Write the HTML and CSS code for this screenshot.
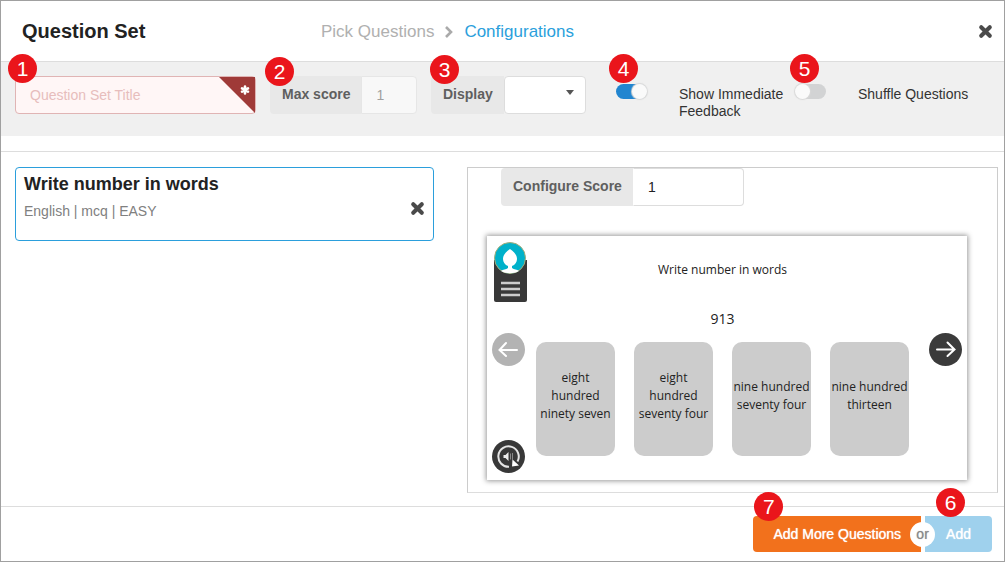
FILE: index.html
```html
<!DOCTYPE html>
<html lang="en">
<head>
<meta charset="utf-8">
<title>Question Set</title>
<link rel="stylesheet" href="styles.css">
</head>
<body>
<div class="frame">
  <header class="header">
    <h1 class="header-title">Question Set</h1>
    <nav class="steps" aria-label="Steps">
      <a class="step" href="#pick">Pick Questions</a>
      <svg class="chevron" viewBox="0 0 10 14" aria-hidden="true"><path d="M2 2l5 5-5 5"/></svg>
      <a class="step step-active" href="#config">Configurations</a>
    </nav>
    <button class="icon-button" type="button" aria-label="Close">
      <svg class="cross" viewBox="0 0 14 14" aria-hidden="true"><path d="M3 3l8 8M11 3l-8 8"/></svg>
    </button>
  </header>

  <form class="toolbar">
    <div class="cell">
      <div class="title-field">
        <input class="title-input" type="text" placeholder="Question Set Title" aria-label="Question Set Title">
        <svg class="required" viewBox="0 0 36 36" aria-hidden="true">
          <path d="M0 0H36V36Z" fill="#9f3a38"/>
          <path d="M26 9.5v7M23 11.3l6 3.4M29 11.3l-6 3.4" stroke="#fff" stroke-width="2.6" stroke-linecap="round"/>
        </svg>
        <span class="badge badge-title">1</span>
      </div>
    </div>
    <div class="cell">
      <div class="field">
        <label class="field-label" for="max">Max score</label>
        <input class="field-input" id="max" type="text" value="1" disabled>
        <span class="badge badge-max">2</span>
      </div>
    </div>
    <div class="cell cell-display">
      <div class="field">
        <label class="field-label" for="display">Display</label>
        <select class="field-input field-select" id="display"><option></option></select>
        <svg class="caret" viewBox="0 0 8 5" aria-hidden="true"><path d="M0 0h8L4 5z"/></svg>
        <span class="badge badge-display">3</span>
      </div>
    </div>
    <div class="switch-cell">
      <input class="switch" id="feedback" type="checkbox" role="switch" checked>
      <label class="switch-label" for="feedback">Show Immediate Feedback</label>
      <span class="badge badge-feedback">4</span>
    </div>
    <div class="switch-cell">
      <input class="switch" id="shuffle" type="checkbox" role="switch">
      <label class="switch-label" for="shuffle">Shuffle Questions</label>
      <span class="badge badge-shuffle">5</span>
    </div>
  </form>

  <main class="content">
    <article class="card">
      <div>
        <h2 class="card-title">Write number in words</h2>
        <p class="card-meta">English | mcq | EASY</p>
      </div>
      <button class="icon-button" type="button" aria-label="Remove question">
        <svg class="cross" viewBox="0 0 14 14" aria-hidden="true"><path d="M3 3l8 8M11 3l-8 8"/></svg>
      </button>
    </article>

    <section class="panel">
      <div class="field field-score">
        <label class="field-label" for="score">Configure Score</label>
        <input class="field-input" id="score" type="text" value="1">
      </div>
      <div class="preview">
        <div class="rail">
          <button class="menu" type="button" aria-label="Menu">
            <svg viewBox="0 0 33 62" width="33" height="62" aria-hidden="true">
              <path d="M0 19h33v40a2 2 0 0 1-2 2H2a2 2 0 0 1-2-2z" fill="#383838"/>
              <circle cx="16" cy="17" r="15.5" fill="#00b1ca" stroke="#a5ad79"/>
              <path d="M16 8c-5 3-7 7-7 10 0 3 2 6 5 7v2c-2 2-5 1-7 3 5 3 13 3 18 0-2-2-5-1-7-3v-2c3-1 5-4 5-7 0-3-2-7-7-10z" fill="#fff"/>
              <path d="M7 42h19M7 48h19M7 54h19" stroke="#ccc" stroke-width="2.6"/>
            </svg>
          </button>
          <button class="round round-prev" type="button" aria-label="Previous">
            <svg viewBox="0 0 33 33" aria-hidden="true">
              <circle cx="16.5" cy="16.5" r="16.5" fill="#b3b3b3"/>
              <path d="M25 17H8M14 10l-6.5 7 6.5 6" fill="none" stroke="#fff" stroke-width="2" stroke-linecap="round"/>
            </svg>
          </button>
          <button class="round round-audio" type="button" aria-label="Replay audio">
            <svg viewBox="0 0 33 33" aria-hidden="true">
              <circle cx="16.5" cy="16.5" r="16.5" fill="#383838"/>
              <path d="M17 26.8A10.2 10.2 0 1 1 25.5 21.5" fill="none" stroke="#e5e5e5" stroke-width="2"/>
              <path d="M20 26.5l.5-7 6.500 6z" fill="#fff"/>
              <path d="M11.500 15h2l3-3v9l-3-3h-2z" fill="#eee"/>
              <path d="M18.500 13.500v6M20.500 13v7" stroke="#888" stroke-width="1"/>
            </svg>
          </button>
        </div>
        <div class="question">
          <p class="question-text">Write number in words</p>
          <p class="question-number">913</p>
          <div class="options">
            <button class="option" type="button">eight hundred ninety seven</button>
            <button class="option" type="button">eight hundred seventy four</button>
            <button class="option" type="button">nine hundred seventy four</button>
            <button class="option" type="button">nine hundred thirteen</button>
          </div>
        </div>
        <button class="round round-next" type="button" aria-label="Next">
          <svg viewBox="0 0 33 33" aria-hidden="true">
            <circle cx="16.5" cy="16.5" r="16.5" fill="#3b3b3b"/>
            <path d="M8 16.5h17M18.5 9.5l7 7-7 6.5" fill="none" stroke="#fff" stroke-width="2" stroke-linecap="round"/>
          </svg>
        </button>
      </div>
    </section>
  </main>

  <footer class="footer">
    <div class="actions">
      <button class="action action-more" type="button">Add More Questions<span class="or">or</span></button>
      <button class="action action-add" type="button">Add</button>
      <span class="badge badge-more">7</span>
      <span class="badge badge-add">6</span>
    </div>
  </footer>
</div>
</body>
</html>
```
FILE: styles.css
```css
* { box-sizing: border-box; }

body {
  margin: 0;
  font: 14px/17px "Liberation Sans", Arial, sans-serif;
  color: #222;
  background: #fff;
}

h1, h2, p { margin: 0; }

button, input, select { font: inherit; color: inherit; }

button {
  padding: 0;
  border: 0;
  background: none;
  cursor: pointer;
}

svg { display: block; }

.frame {
  display: flex;
  flex-direction: column;
  min-height: 100vh;
  border: 1px solid #a0a0a0;
}

/* Header */
.header {
  display: grid;
  grid-template-columns: 299px 1fr auto;
  align-items: center;
  height: 61px;
  padding: 0 11px 0 21px;
  border-bottom: 1px solid #ddd;
}

.header-title { font-size: 20px; line-height: 24px; }

.steps {
  display: flex;
  align-items: center;
  gap: 10px;
  padding-top: 1px;
  font-size: 17px;
  line-height: 22px;
}

.step { color: #b0b0b0; text-decoration: none; }
.step-active { color: #2b9fdc; }

.chevron {
  width: 10px;
  height: 14px;
  fill: none;
  stroke: #aaa;
  stroke-width: 2.6;
}

.cross {
  width: 15px;
  height: 15px;
  fill: none;
  stroke: #4a4a4a;
  stroke-width: 3.8;
  stroke-linecap: round;
}

/* Toolbar */
.toolbar {
  display: grid;
  grid-template-columns: 255fr 161fr 185fr 179fr 194fr;
  margin-bottom: 15px;
  padding: 14px 15px 16px 14px;
  background: #f0f0f0;
}

.cell { padding-right: 14px; min-width: 0; }
.cell-display { padding-right: 30px; }

.title-field { position: relative; }

.title-input {
  display: block;
  width: 100%;
  height: 38px;
  padding: 0 14px;
  border: 1px solid #e0b4b4;
  border-radius: 4px;
  background: #fff6f6;
  outline: 0;
}

.title-input::placeholder { color: #e7bdbc; opacity: 1; }

.required {
  position: absolute;
  top: 1px;
  right: 1px;
  width: 36px;
  height: 36px;
}

.field { position: relative; display: flex; height: 38px; }

.field-label {
  padding: 10px 11px 10px 12px;
  border-radius: 4px 0 0 4px;
  background: #e8e8e8;
  color: #5f5f5f;
  font-weight: bold;
  line-height: 17px;
  white-space: nowrap;
}

.field-input {
  flex: 1;
  min-width: 0;
  padding: 0 14px;
  border: 1px solid #ddd;
  border-left-color: transparent;
  border-radius: 0 4px 4px 0;
  background: #fff;
  outline: 0;
}

.field-input:disabled {
  border-color: #e6e6e6;
  background: #f8f8f8;
  color: #a0a0a0;
}

.field-select {
  appearance: none;
  border-color: #ddd;
  border-radius: 4px;
}

.caret {
  position: absolute;
  top: 14px;
  right: 12px;
  width: 8px;
  height: 5px;
  fill: #555;
  pointer-events: none;
}

.switch-cell {
  position: relative;
  display: flex;
  align-items: flex-start;
  gap: 32px;
  padding-top: 8px;
}

.switch {
  appearance: none;
  flex: none;
  width: 31px;
  height: 15px;
  margin: 0;
  border-radius: 8px;
  background: #d2d3d4;
}

.switch::before {
  content: "";
  display: block;
  width: 15px;
  height: 15px;
  border-radius: 50%;
  background: #fafafa;
  box-shadow: 0 0 1px 1px #d8d8d8;
}

.switch:checked { background: #2185d0; }
.switch:checked::before { margin-left: auto; }

.switch-label { padding-top: 2px; color: #333; }

/* Numbered markers */
.badge {
  position: absolute;
  width: 29px;
  height: 29px;
  border-radius: 50%;
  background: #ea151b;
  color: #fff;
  font-size: 21px;
  line-height: 29px;
  text-align: center;
}

.badge-title { top: -22px; left: -7px; }
.badge-max { top: -19px; left: -5px; }
.badge-display { top: -21px; left: -1px; }
.badge-feedback { top: -22px; left: -7px; }
.badge-shuffle { top: -22px; left: -5px; }
.badge-more { top: -24px; left: 1px; }
.badge-add { top: -28px; right: 27px; }

/* Content */
.content {
  display: grid;
  flex: 1;
  grid-template-columns: 419fr 531fr;
  gap: 33px;
  align-items: start;
  padding: 15px 6px 13px 14px;
  border-top: 1px solid #ddd;
}

.card {
  display: flex;
  align-items: center;
  justify-content: space-between;
  min-height: 74px;
  padding: 0 8px;
  border: 1px solid #2b9fdc;
  border-radius: 4px;
}

.card > div { align-self: flex-start; padding-top: 5px; }
.card .icon-button { padding-top: 9px; }
.card-title { font-size: 18px; line-height: 22px; }
.card-meta { margin-top: 8px; color: #808080; }

.panel { border: 1px solid #ccc; border-bottom-color: #ddd; }

.field-score { width: 243px; margin-left: 33px; }

.preview {
  display: grid;
  grid-template-columns: 33px 1fr 33px;
  margin: 30px 30px 12px 19px;
  padding: 5px 5px 7px;
  background: #fff;
  box-shadow: 0 0 5px 1px #999;
  font-family: "Open Sans", "Noto Sans", sans-serif;
}

.menu { display: block; margin-left: 2px; }

.round { display: block; width: 33px; height: 33px; }
.round-prev { margin-top: 30px; }
.round-audio { margin-top: 74px; }
.round-next { margin-top: 92px; }

.question {
  padding: 20px 20px 0 11px;
  text-align: center;
  font-size: 12px;
  line-height: 18px;
}

.question-number { margin-top: 31px; font-size: 14px; }

.options {
  display: grid;
  grid-template-columns: repeat(4, 1fr);
  gap: 19px;
  margin-top: 14px;
}

.option {
  min-width: 0;
  height: 114px;
  padding-bottom: 6px;
  border-radius: 10px;
  background: #ccc;
  line-height: 18px;
}

/* Footer */
.footer {
  display: flex;
  justify-content: flex-end;
  padding: 9px 12px;
  border-top: 1px solid #ddd;
}

.actions { position: relative; display: flex; gap: 4px; }

.action {
  height: 36px;
  color: #fff;
  text-shadow: 0 0 1px #fff;
}

.action-more {
  position: relative;
  padding: 0 20px;
  border-radius: 4px 0 0 4px;
  background: #f2711c;
}

.action-add {
  padding: 0 21px;
  border-radius: 0 4px 4px 0;
  background: #9fd1ed;
}

.or {
  position: absolute;
  z-index: 1;
  top: 6px;
  right: -14px;
  width: 25px;
  height: 25px;
  border-radius: 50%;
  background: #fff;
  color: #888;
  line-height: 24px;
  text-shadow: 0 0 1px #aaa;
}
```
